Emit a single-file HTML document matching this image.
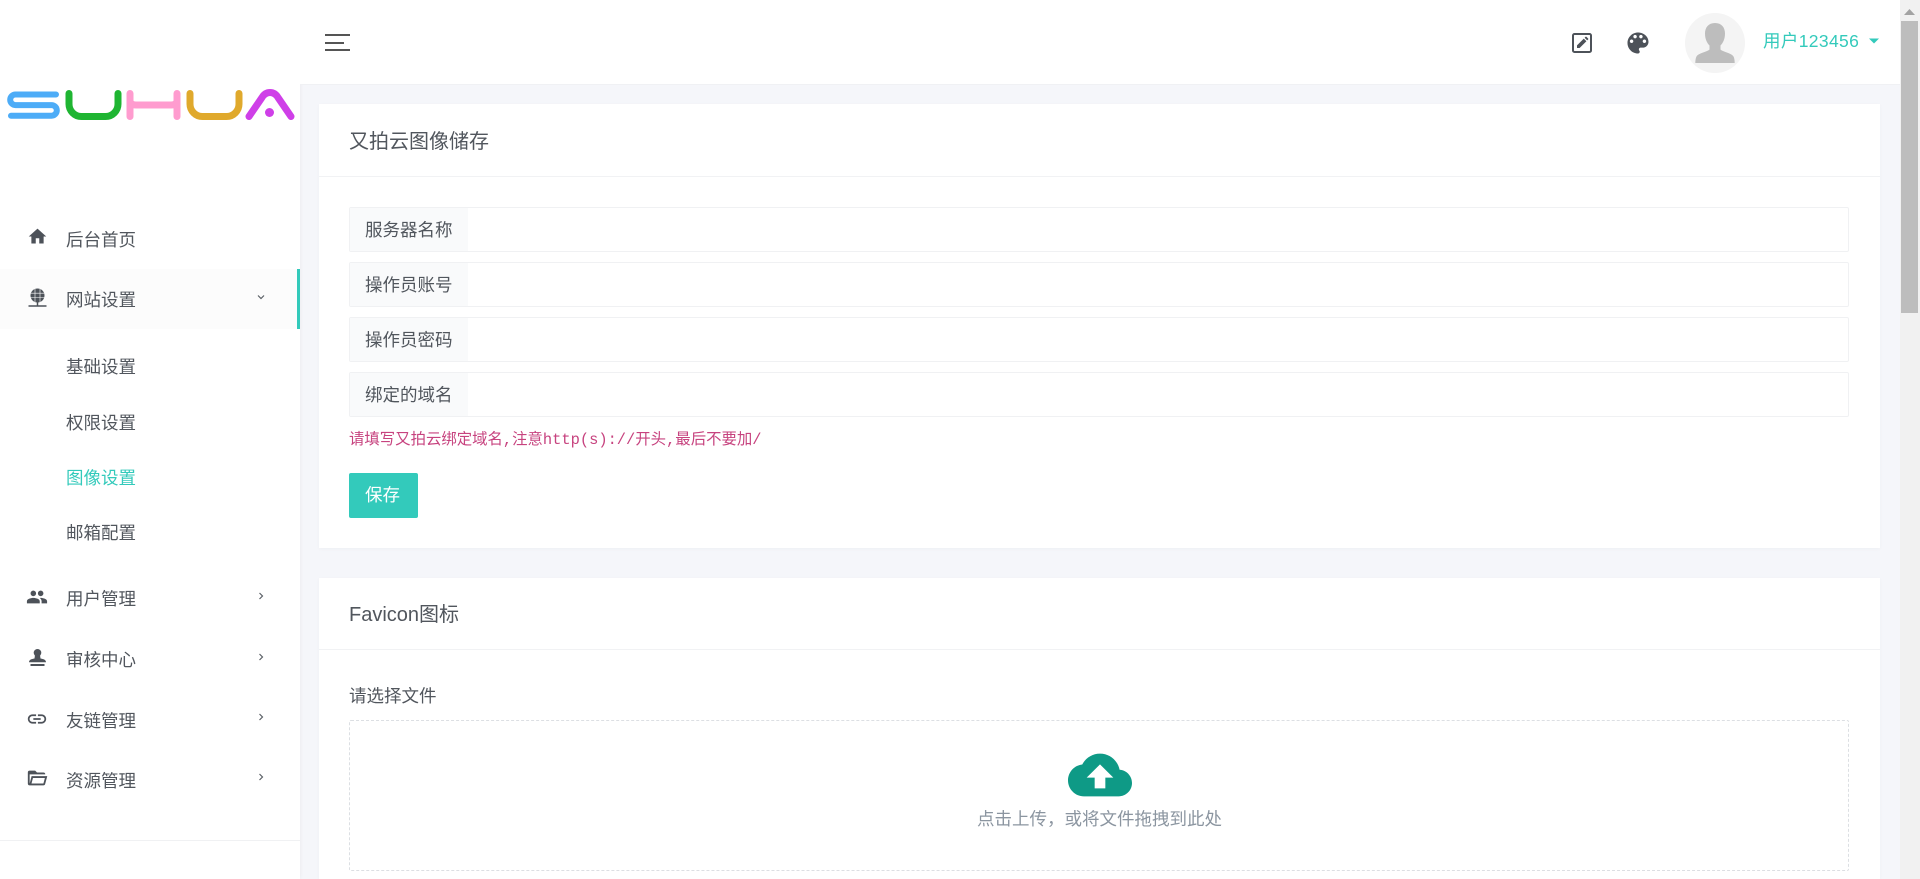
<!DOCTYPE html>
<html lang="zh">
<head>
<meta charset="utf-8">
<title>图像设置</title>
<style>
*{box-sizing:border-box}
html,body{margin:0;padding:0;width:1920px;height:879px;overflow:hidden;background:#f5f6fa;font-family:"Liberation Sans","Noto Sans CJK SC",sans-serif;color:#51565d;font-size:17.5px}
.a{position:absolute}
.t{position:absolute;white-space:nowrap;line-height:30px;height:30px}
#side{left:0;top:0;width:300px;height:879px;background:#fff;box-shadow:0 0 4px rgba(0,0,0,.06)}
#head{left:300px;top:0;width:1600px;height:85px;background:#fff;border-bottom:1px solid #f0f1f4}
.card{position:absolute;left:319px;width:1561px;background:#fff;box-shadow:0 1px 4px rgba(0,0,0,.03)}
.ln{position:absolute;left:0;right:0;height:1px;background:#f1f2f4}
.inp{position:absolute;left:349px;width:1500px;height:45px;border:1px solid #f0f1f3;border-radius:2px;background:#fff}
.inp b{position:absolute;left:0;top:0;bottom:0;width:118px;background:#f9fafb;font-weight:400;padding-left:15px;line-height:45px}
svg{position:absolute;display:block}
.ic{fill:#4d5259}
.ar{fill:none;stroke:#5a6066;stroke-width:1.2}
</style>
</head>
<body>
<div class="a" id="side">
  <svg style="left:0;top:80px" width="300" height="50" viewBox="0 80 300 50" fill="none" stroke-width="7" stroke-linecap="round" stroke-linejoin="round">
    <path stroke="#4dacf7" stroke-width="6" d="M56 94.500H15.500A5.300 5.300 0 0 0 15.500 105.100H51.500A5.200 5.200 0 0 1 51.500 115.700H11"/>
    <path stroke="#1fb532" d="M69 93.500V104A12.500 12.500 0 0 0 81.500 116.500H105.500A12.500 12.500 0 0 0 118 104V93.500"/>
    <path stroke="#ff9ccf" d="M130 93.500V116.500M177 93.500V116.500M130 100Q130 105 136 105H171Q177 105 177 100"/>
    <path stroke="#e0a92c" d="M190 93.500V104A12.500 12.500 0 0 0 202.500 116.500H226.500A12.500 12.500 0 0 0 239 104V93.500"/>
    <path stroke="#cf3fe8" d="M249 116.500L262 97.500Q265 92.500 270 92.500Q275 92.500 278 97.500L291 116.500"/>
    <circle cx="269.500" cy="112.500" r="4.500" fill="#cf3fe8" stroke="none"/>
  </svg>

  <svg class="ic" style="left:27px;top:226px" width="21" height="21" viewBox="0 0 24 24"><path d="M10 20v-6h4v6h5v-8h3L12 3 2 12h3v8z"/></svg>
  <div class="t" style="left:66px;top:225px">后台首页</div>

  <div class="a" style="left:0;top:269px;width:300px;height:60px;background:#fcfcfc"></div>
  <div class="a" style="left:297px;top:269px;width:3px;height:60px;background:#33cabb"></div>
  <svg style="left:28px;top:288px" width="19" height="20" viewBox="0 0 19 20" fill="none" stroke="#4d5259">
    <circle cx="9.500" cy="7.500" r="7" fill="#4d5259" stroke="none"/>
    <path stroke="#fff" stroke-width=".6" d="M2.500 5.200H16.500M2.500 9.500H16.500M7 1V14M12 1V14"/>
    <path stroke-width="1.500" d="M9.500 14V18M0.500 18H18.500"/>
  </svg>
  <div class="t" style="left:66px;top:285px">网站设置</div>
  <svg class="ar" style="left:257px;top:294px" width="8" height="6" viewBox="0 0 8 6"><path d="M1 1.500L4 4.500L7 1.500"/></svg>

  <div class="t" style="left:66px;top:352px">基础设置</div>
  <div class="t" style="left:66px;top:408px">权限设置</div>
  <div class="t" style="left:66px;top:463px;color:#33cabb">图像设置</div>
  <div class="t" style="left:66px;top:518px">邮箱配置</div>

  <svg class="ic" style="left:26px;top:586px" width="22" height="22" viewBox="0 0 24 24"><path d="M16 11c1.660 0 2.990-1.340 2.990-3S17.660 5 16 5c-1.660 0-3 1.340-3 3s1.340 3 3 3zm-8 0c1.660 0 2.990-1.340 2.990-3S9.660 5 8 5C6.340 5 5 6.340 5 8s1.340 3 3 3zm0 2c-2.330 0-7 1.170-7 3.500V19h14v-2.500c0-2.330-4.670-3.500-7-3.500zm8 0c-.29 0-.62.02-.97.05 1.160.84 1.970 1.970 1.970 3.450V19h6v-2.500c0-2.330-4.670-3.500-7-3.500z"/></svg>
  <div class="t" style="left:66px;top:584px">用户管理</div>
  <svg class="ar" style="left:258px;top:592px" width="6" height="8" viewBox="0 0 6 8"><path d="M1.500 1L4.500 4L1.500 7"/></svg>

  <svg class="ic" style="left:29px;top:649px" width="17" height="19" viewBox="0 0 17 19"><circle cx="8.500" cy="3.800" r="3.800"/><path d="M6 6h5l.5 3.500c2 .4 5.500.8 5.500 3.800H0c0-3 3.500-3.400 5.500-3.800z"/><rect x="1.500" y="15" width="14" height="2"/></svg>
  <div class="t" style="left:66px;top:645px">审核中心</div>
  <svg class="ar" style="left:258px;top:653px" width="6" height="8" viewBox="0 0 6 8"><path d="M1.500 1L4.500 4L1.500 7"/></svg>

  <svg class="ic" style="left:26px;top:708px" width="22" height="22" viewBox="0 0 24 24"><path d="M3.900 12c0-1.710 1.390-3.100 3.100-3.100h4V7H7c-2.760 0-5 2.240-5 5s2.240 5 5 5h4v-1.900H7c-1.710 0-3.100-1.390-3.100-3.100zM8 13h8v-2H8v2zm9-6h-4v1.900h4c1.710 0 3.100 1.390 3.100 3.100s-1.390 3.100-3.100 3.100h-4V17h4c2.760 0 5-2.240 5-5s-2.240-5-5-5z"/></svg>
  <div class="t" style="left:66px;top:706px">友链管理</div>
  <svg class="ar" style="left:258px;top:713px" width="6" height="8" viewBox="0 0 6 8"><path d="M1.500 1L4.500 4L1.500 7"/></svg>

  <svg class="ic" style="left:26px;top:767px" width="22" height="22" viewBox="0 0 24 24"><path d="M6.100 10L4 18V8H21A2 2 0 0 0 19 6H12L10 4H4A2 2 0 0 0 2 6V18A2 2 0 0 0 4 20H19C19.900 20 20.700 19.400 20.900 18.500L23.200 10H6.100M19 18H6L7.600 12H20.600L19 18Z"/></svg>
  <div class="t" style="left:66px;top:766px">资源管理</div>
  <svg class="ar" style="left:258px;top:773px" width="6" height="8" viewBox="0 0 6 8"><path d="M1.500 1L4.500 4L1.500 7"/></svg>

  <div class="a" style="left:0;top:840px;width:300px;height:1px;background:#f0f1f3"></div>
</div>

<div class="a" id="head">
  <div class="a" style="left:25px;top:34px;width:25px;height:2px;background:#555"></div>
  <div class="a" style="left:25px;top:42px;width:19px;height:2px;background:#555"></div>
  <div class="a" style="left:25px;top:49px;width:25px;height:2px;background:#555"></div>

  <svg style="left:1272px;top:33px" width="20" height="20" viewBox="0 0 20 20">
    <rect x="1" y="1" width="18" height="18" rx="1.500" fill="none" stroke="#4d5259" stroke-width="2"/>
    <path fill="#4d5259" d="M5 15v-2.600l6.800-6.800 2.600 2.600L7.600 15zM12.600 4.800l1-1q.4-.4.8 0l1.800 1.800q.4.4 0 .8l-1 1z"/>
  </svg>
  <svg class="ic" style="left:1324px;top:29px" width="28" height="28" viewBox="0 0 24 24"><path d="M12 3c-4.970 0-9 4.030-9 9s4.030 9 9 9c.83 0 1.500-.67 1.500-1.500 0-.39-.15-.74-.39-1.010-.23-.26-.38-.61-.38-.99 0-.83.67-1.500 1.500-1.500H16c2.760 0 5-2.240 5-5 0-4.420-4.030-8-9-8zm-5.500 9c-.83 0-1.500-.67-1.500-1.500S5.670 9 6.500 9 8 9.670 8 10.500 7.330 12 6.500 12zm3-4C8.670 8 8 7.330 8 6.500S8.670 5 9.500 5s1.500.67 1.500 1.500S10.330 8 9.500 8zm5 0c-.83 0-1.500-.67-1.500-1.500S13.670 5 14.500 5s1.500.67 1.500 1.500S15.330 8 14.500 8zm3 4c-.83 0-1.500-.67-1.500-1.500S16.670 9 17.500 9s1.500.67 1.500 1.500-.67 1.500-1.500 1.500z"/></svg>

  <svg style="left:1385px;top:13px" width="60" height="60" viewBox="0 0 60 60">
    <circle cx="30" cy="30" r="30" fill="#f4f4f4"/>
    <path fill="#bdbdbd" d="M30 10c6.500 0 10 4.500 10 10.500 0 5.500-2 9.500-4.500 12v4c2.500 2.500 11 3.500 13 7 .8 1.500 1.200 4 1.200 6.500H10.300c0-2.500.4-5 1.200-6.500 2-3.500 10.500-4.500 13-7v-4c-2.500-2.500-4.500-6.500-4.500-12C20 14.500 23.500 10 30 10z"/>
  </svg>
  <div class="t" style="left:1463px;top:26px;color:#33cabb;letter-spacing:.35px">用户123456</div>
  <svg style="left:1569px;top:38px" width="10" height="6" viewBox="0 0 10 6"><path fill="#33cabb" d="M0 .5H10L5 5.500z"/></svg>
</div>

<div class="card" style="top:104px;height:444px">
  <div class="t" style="left:30px;top:23px;font-size:20px">又拍云图像储存</div>
  <div class="ln" style="top:72px"></div>
</div>
<div class="inp" style="top:207px"><b>服务器名称</b></div>
<div class="inp" style="top:262px"><b>操作员账号</b></div>
<div class="inp" style="top:317px"><b>操作员密码</b></div>
<div class="inp" style="top:372px"><b>绑定的域名</b></div>
<div class="t" style="left:349px;top:425px;font-family:'Liberation Mono','Noto Sans CJK SC',monospace;font-size:15.400px;color:#c7437f">请填写又拍云绑定域名,注意http(s)://开头,最后不要加/</div>
<div class="a" style="left:349px;top:473px;width:69px;height:45px;background:#33cabb;border-radius:2px;color:#fff;padding-left:16px;line-height:45px">保存</div>

<div class="card" style="top:578px;height:301px">
  <div class="t" style="left:30px;top:22px;font-size:20px">Favicon图标</div>
  <div class="ln" style="top:71px"></div>
  <div class="t" style="left:30px;top:103px">请选择文件</div>
</div>
<div class="a" style="left:349px;top:720px;width:1500px;height:151px;border:1px dashed #dcdfe3;border-radius:2px"></div>
<svg style="left:1068px;top:743px" width="64" height="64" viewBox="0 0 24 24"><path fill="#0e9a86" d="M19.350 10.040C18.670 6.590 15.640 4 12 4 9.110 4 6.600 5.640 5.350 8.040 2.340 8.360 0 10.910 0 14c0 3.310 2.690 6 6 6h13c2.760 0 5-2.240 5-5 0-2.640-2.050-4.780-4.650-4.960zM14 13v4h-4v-4H7l5-5 5 5h-3z"/></svg>
<div class="t" style="left:977px;top:804px;color:#8b95a0">点击上传，或将文件拖拽到此处</div>

<div class="a" style="left:1900px;top:0;width:20px;height:879px;background:#f1f1f1"></div>
<svg style="left:1904px;top:9px" width="11" height="6" viewBox="0 0 11 6"><path fill="#a3a3a3" d="M5.500 0L11 6H0z"/></svg>
<div class="a" style="left:1901px;top:21px;width:17px;height:292px;background:#bdbdbd"></div>
</body>
</html>
